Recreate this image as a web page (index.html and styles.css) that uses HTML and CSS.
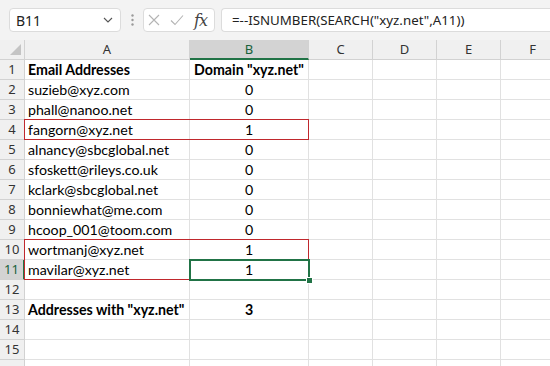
FILE: index.html
```html
<!DOCTYPE html>
<html lang="en">
<head>
    <meta charset="UTF-8" />
    <title>Book1 - Excel</title>
    <link rel="stylesheet" href="styles.css">
</head>
<body>
<div class="toolbar">
    <div class="namebox">
        <span>B11</span>
        <svg width="10" height="6" viewBox="0 0 10 6"><path d="M1 1 L5 5 L9 1" fill="none" stroke="#555" stroke-width="1.1"/></svg>
    </div>
    <div class="grip">
        <svg width="3" height="12" viewBox="0 0 3 12"><circle cx="1.5" cy="1.5" r="1.2" fill="#9a9a9a"/><circle cx="1.5" cy="6" r="1.2" fill="#9a9a9a"/><circle cx="1.5" cy="10.5" r="1.2" fill="#9a9a9a"/></svg>
    </div>
    <div class="fxbox">
        <svg width="12" height="12" viewBox="0 0 12 12"><path d="M1 1 L11 11 M11 1 L1 11" stroke="#b4b4b4" stroke-width="1.1"/></svg>
        <svg width="14" height="12" viewBox="0 0 14 12"><path d="M1 6.5 L5 10.5 L13 1.5" fill="none" stroke="#b4b4b4" stroke-width="1.1"/></svg>
        <span class="fx">fx</span>
    </div>
    <div class="formula">=--ISNUMBER(SEARCH("xyz.net",A11))</div>
</div>

<div class="sheet" id="sheet"></div>

<script>
    document.addEventListener("DOMContentLoaded", () => {
        const sheet = document.getElementById("sheet")
        const columns = ["A", "B", "C", "D", "E", "F"]

        const data = [
            ["Email Addresses", 'Domain "xyz.net"'],
            ["suzieb@xyz.com", 0],
            ["phall@nanoo.net", 0],
            ["fangorn@xyz.net", 1],
            ["alnancy@sbcglobal.net", 0],
            ["sfoskett@rileys.co.uk", 0],
            ["kclark@sbcglobal.net", 0],
            ["bonniewhat@me.com", 0],
            ["hcoop_001@toom.com", 0],
            ["wortmanj@xyz.net", 1],
            ["mavilar@xyz.net", 1],
            [],
            ['Addresses with "xyz.net"', 3],
            [], []
        ]
        const boldRows = [1, 13]

        function cell(classes, text) {
            const div = document.createElement("div")
            div.className = "cell " + classes
            if (text !== undefined) div.textContent = text
            sheet.appendChild(div)
            return div
        }

        // Column headers
        const corner = cell("head corner")
        corner.innerHTML = '<svg width="11" height="11" viewBox="0 0 11 11"><polygon points="11,0 11,11 0,11" fill="#c4c4c4"/></svg>'
        columns.forEach(col => cell("head" + (col === "B" ? " col-on" : ""), col))

        // Rows
        data.forEach((row, i) => {
            const n = i + 1
            const bold = boldRows.includes(n) ? " bold" : ""
            cell("head" + (n === 11 ? " row-on" : ""), n)
            const a = cell("text" + bold, row[0])
            const b = cell("num" + bold, row[1])
            for (let c = 2; c < columns.length; c++) cell("")

            // Red highlight boxes around the matches
            if (n === 4 || n === 10) {
                a.classList.add("anchor")
                const mark = document.createElement("span")
                mark.className = n === 4 ? "mark" : "mark tall"
                a.appendChild(mark)
            }

            // Active cell
            if (n === 11) {
                b.classList.add("anchor")
                b.insertAdjacentHTML("beforeend", '<span class="active"><span class="handle"></span></span>')
            }
        })

        // Partly visible last row
        cell("head")
        columns.forEach(() => cell(""))
    })
</script>
</body>
</html>
```

FILE: styles.css
```css
* {
    margin: 0;
    padding: 0;
    box-sizing: border-box;
}

body {
    width: 550px;
    height: 366px;
    overflow: hidden;
    background-color: white;
    font-family: "Noto Sans", sans-serif;
    color: #222;
}

/* Formula bar */

.toolbar {
    height: 40px;
    background-color: #f3f3f3;
    display: flex;
    align-items: center;
    padding-left: 9px;
}

.namebox {
    width: 112px;
    height: 24px;
    flex-shrink: 0;
    background-color: white;
    border: 1px solid #dcdcdc;
    border-radius: 4px;
    display: flex;
    align-items: center;
    justify-content: space-between;
    padding: 0 7px 0 6px;
    font-size: 14px;
}

.grip {
    width: 22px;
    flex-shrink: 0;
    display: flex;
    justify-content: center;
}

.fxbox {
    width: 72px;
    height: 24px;
    flex-shrink: 0;
    background-color: white;
    border: 1px solid #dcdcdc;
    border-radius: 4px;
    display: flex;
    align-items: center;
    gap: 10px;
    padding-left: 4px;
}

.fx {
    font-family: "DejaVu Serif", "Liberation Serif", serif;
    font-style: italic;
    font-size: 16px;
    color: #444;
    letter-spacing: -1px;
}

.formula {
    flex: 1;
    min-width: 400px;
    margin-left: 6px;
    height: 24px;
    background-color: white;
    border: 1px solid #dcdcdc;
    border-right: none;
    border-radius: 4px 0 0 4px;
    padding-left: 10px;
    display: flex;
    align-items: center;
    font-size: 13.3px;
    white-space: nowrap;
}

/* Worksheet grid */

.sheet {
    display: grid;
    grid-template-columns: 25px 165px 119px 64px 64px 64px 64px;
    grid-auto-rows: 20px;
    font-family: Lato, "Liberation Sans", sans-serif;
    font-size: 14.2px;
    color: #000;
}

.cell {
    border-right: 1px solid #e1e1e1;
    border-bottom: 1px solid #e1e1e1;
    padding: 0 3px;
    line-height: 19px;
    white-space: nowrap;
}

.num {
    text-align: center;
}

.bold {
    font-weight: bold;
}

.head {
    background-color: #f0f0f0;
    border-color: #d2d2d2;
    text-align: center;
    padding: 0;
    font-family: "Noto Sans", sans-serif;
    font-size: 13px;
    color: #333;
}

.corner {
    display: flex;
    justify-content: flex-end;
    align-items: flex-end;
    padding: 0 3px 4px 0;
}

.col-on {
    background-color: #d3d3d3;
    border-bottom: 2px solid #217346;
    color: #17613a;
}

.row-on {
    background-color: #d3d3d3;
    border-right: 2px solid #217346;
    color: #17613a;
}

.anchor {
    position: relative;
}

.mark {
    position: absolute;
    z-index: 1;
    left: -1px;
    top: -1px;
    width: 285px;
    height: 21px;
    border: 1px solid #c0282d;
}

.mark.tall {
    height: 41px;
}

.active {
    position: absolute;
    z-index: 1;
    left: -1px;
    top: -1px;
    width: 121px;
    height: 22px;
    border: 2px solid #217346;
}

.handle {
    position: absolute;
    right: -5px;
    bottom: -5px;
    width: 7px;
    height: 7px;
    background-color: #217346;
    border: 1px solid white;
}
```
